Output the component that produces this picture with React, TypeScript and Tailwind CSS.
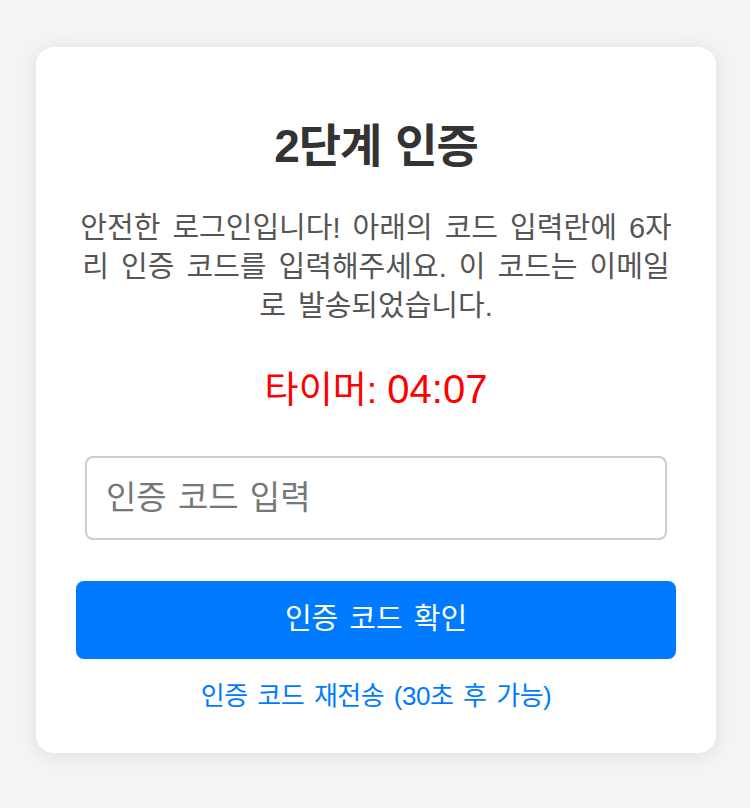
import React from "react";

const font = "font-['Liberation_Sans','Noto_Sans_CJK_KR',sans-serif]";

const App = () => {
  return (
    <div className={`min-h-[808px] w-full bg-[#f4f4f4] pt-[47px] ${font}`}>
      <div className="mx-[36px] w-[680px] rounded-[18px] bg-white px-[40px] pt-[71px] pb-[40px] shadow-[0_2px_20px_rgba(0,0,0,0.09)]">
        <h2 className="text-center text-[46px] font-bold leading-[56px] tracking-[-1px] text-[#333] [word-spacing:2px]">
          2단계 인증
        </h2>
        <p className="mt-[35px] whitespace-nowrap text-center text-[29px] leading-[39px] text-[#555] [word-spacing:4px]">
          안전한 로그인입니다! 아래의 코드 입력란에 6자
          <br />
          리 인증 코드를 입력해주세요. 이 코드는 이메일
          <br />
          로 발송되었습니다.
        </p>
        <div className="mt-[39px] text-center text-[40px] leading-[48px] text-[#ff0000]">
          <span className="text-[37px]">타이머: </span>
          04:07
        </div>
        <input
          type="text"
          placeholder="인증 코드 입력"
          className={`mx-[9px] mt-[41px] block h-[84px] w-[582px] rounded-[8px] border-2 border-[#ccc] pl-[19px] pr-[20px] text-[33px] text-[#333] outline-none [word-spacing:2px] placeholder:text-[#777] ${font}`}
        />
        <button
          className={`mt-[41px] block h-[78px] w-[600px] rounded-[8px] bg-[#007bff] text-[29px] text-white [word-spacing:3px] ${font}`}
        >
          인증 코드 확인
        </button>
        <div className="mt-[20px] text-center text-[26px] leading-[34px] tracking-[-0.5px] text-[#007bff] [word-spacing:3px]">
          인증 코드 재전송 (30초 후 가능)
        </div>
      </div>
    </div>
  );
};

export default App;
